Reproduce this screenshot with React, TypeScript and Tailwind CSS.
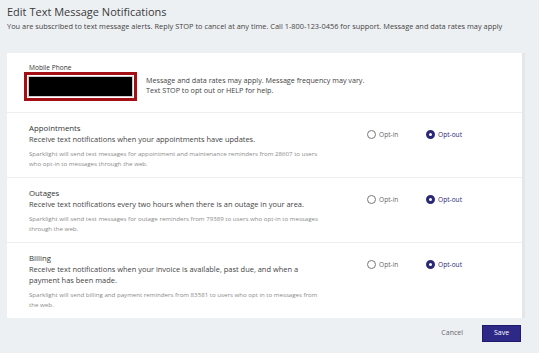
import { useState } from 'react'

interface Topic {
  id: string
  title: string
  description: string
  note: string
}

const topics: Topic[] = [
  {
    id: 'appointments',
    title: 'Appointments',
    description: 'Receive text notifications when your appointments have updates.',
    note: 'Sparklight will send text messages for appointment and maintenance reminders from 28607 to users who opt-in to messages through the web.',
  },
  {
    id: 'outages',
    title: 'Outages',
    description: 'Receive text notifications every two hours when there is an outage in your area.',
    note: 'Sparklight will send text messages for outage reminders from 79389 to users who opt-in to messages through the web.',
  },
  {
    id: 'billing',
    title: 'Billing',
    description: 'Receive text notifications when your invoice is available, past due, and when a payment has been made.',
    note: 'Sparklight will send billing and payment reminders from 83581 to users who opt in to messages from the web.',
  },
]

function Radio({ checked, label, onClick }: { checked: boolean; label: string; onClick: () => void }) {
  return (
    <button onClick={onClick} className="flex items-center gap-[3px] text-[6.6px] leading-[9px] text-[#666]">
      {checked ? (
        <span className="w-[9px] h-[9px] rounded-full border-[3px] border-[#2c2878] bg-white" />
      ) : (
        <span className="w-[9px] h-[9px] rounded-full border border-[#777] bg-white" />
      )}
      <span className={checked ? 'text-[#2c2878]' : ''}>{label}</span>
    </button>
  )
}

export default function App() {
  const [prefs, setPrefs] = useState<Record<string, boolean>>({
    appointments: false,
    outages: false,
    billing: false,
  })

  return (
    <div className="min-h-screen bg-[#edf0f3] px-[7px] pt-[3px] font-['Open_Sans',sans-serif] text-[#333]">
      <h1 className="text-[11px] leading-[17px] text-[#3a3a3a]">Edit Text Message Notifications</h1>
      <p className="mt-[1px] text-[7.4px] leading-[11px] text-[#444]">
        You are subscribed to text message alerts. Reply STOP to cancel at any time. Call 1-800-123-0456 for support. Message and data rates may apply
      </p>

      <div className="mt-[21px] w-[515px] bg-white shadow-[3px_0_0_#e4e7ea]">
        <div className="flex items-start px-[22px] pt-[10px] pb-[11px] border-b border-[#eceef0]">
          <div>
            <div className="text-[6.6px] leading-[9px] text-[#333]">Mobile Phone</div>
            <div className="-ml-[5px] w-[113px] border-[3px] border-[#a30f15] bg-white p-[1px]">
              <div className="h-[21px] bg-black border border-[#ccc]" />
            </div>
          </div>
          <div className="ml-[9px] mt-[12px] text-[7.2px] leading-[10px] text-[#444]">
            <div>Message and data rates may apply. Message frequency may vary.</div>
            <div>Text STOP to opt out or HELP for help.</div>
          </div>
        </div>

        {topics.map((t, i) => (
          <div
            key={t.id}
            className={`flex items-start px-[22px] pt-[10px] pb-[9px] ${i < topics.length - 1 ? 'border-b border-[#eceef0]' : ''}`}
          >
            <div className="w-[338px] pr-[40px]">
              <div className="text-[7.8px] leading-[11px] text-[#333]">{t.title}</div>
              <div className="text-[7.45px] leading-[11px] text-[#444]">{t.description}</div>
              <div className="mt-[4px] text-[6.15px] leading-[9.5px] text-[#8a8a8a]">{t.note}</div>
            </div>
            <div className="flex mt-[7px]">
              <div className="w-[59px]">
                <Radio checked={prefs[t.id]} label="Opt-in" onClick={() => setPrefs({ ...prefs, [t.id]: true })} />
              </div>
              <Radio checked={!prefs[t.id]} label="Opt-out" onClick={() => setPrefs({ ...prefs, [t.id]: false })} />
            </div>
          </div>
        ))}
      </div>

      <div className="w-[514px] flex justify-end items-center gap-[19px] mt-[7px]">
        <button className="text-[7px] text-[#666]">Cancel</button>
        <button className="w-[39px] h-[17px] bg-[#2e2886] text-white text-[7px] border border-[#1f1b6a]">Save</button>
      </div>
    </div>
  )
}
